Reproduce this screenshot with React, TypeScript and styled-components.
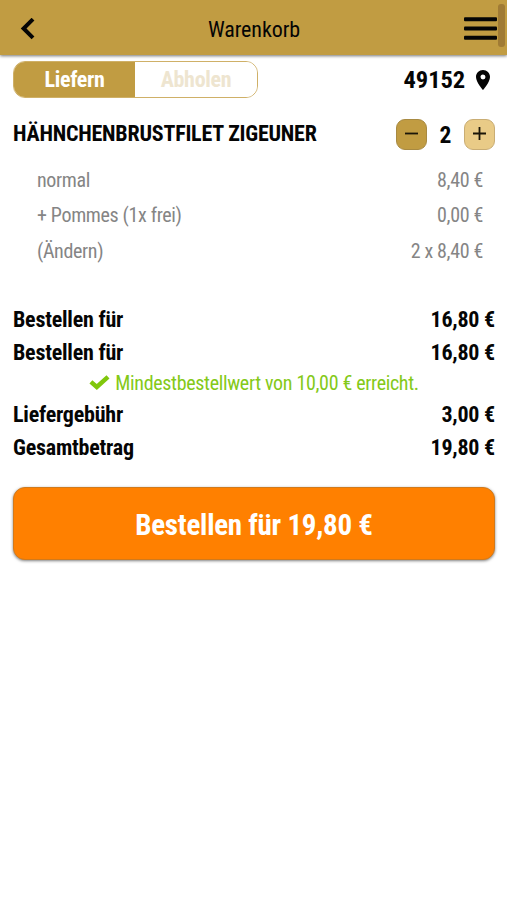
import React from "react";
import styled, { createGlobalStyle } from "styled-components";

const gold = "#c19c42";

const GlobalStyle = createGlobalStyle`
  *, *::before, *::after { box-sizing: border-box; }
  html, body { margin: 0; background: #fff; overflow: hidden; }
  body { font-family: "Roboto Condensed", Roboto, sans-serif; font-stretch: 75%; color: #050505; }
  button { font: inherit; font-stretch: inherit; color: inherit; padding: 0; margin: 0; }
`;

const Page = styled.div`
  width: 507px;
  height: 900px;
  background: #fff;
`;

const Header = styled.header`
  position: relative;
  height: 55px;
  display: grid;
  grid-template-columns: 60px 1fr 60px;
  align-items: center;
  padding-top: 2px;
  background: ${gold};
  box-shadow: 0 1px 3px rgba(0, 0, 0, 0.55);
`;

const Title = styled.h1`
  margin: 0;
  padding: 2px 0 0 1px;
  text-align: center;
  font-size: 22px;
  font-weight: 400;
  line-height: 30px;
  letter-spacing: -0.1px;
`;

const IconButton = styled.button<{ $end?: boolean }>`
  display: flex;
  justify-content: ${(p) => (p.$end ? "flex-end" : "flex-start")};
  padding: ${(p) => (p.$end ? "0 10px 0 0" : "0 0 0 20px")};
  border: 0;
  background: none;
  svg { display: block; }
`;

const ScrollThumb = styled.span`
  position: absolute;
  top: 4px;
  right: 2px;
  width: 7px;
  height: 43px;
  border-radius: 3px;
  background: #a07b35;
`;

const Content = styled.main`
  padding: 6px 12px 0 13px;
`;

const ModeBar = styled.div`
  display: flex;
  justify-content: space-between;
  align-items: center;
  height: 36px;
`;

const Toggle = styled.div`
  display: grid;
  grid-template-columns: 121px 1fr;
  width: 245px;
  height: 37px;
  border: 1px solid #cfb067;
  border-radius: 12px;
  overflow: hidden;
`;

const Mode = styled.button<{ $active?: boolean }>`
  border: 0;
  padding-top: 1px;
  background: ${(p) => (p.$active ? gold : "#fff")};
  color: ${(p) => (p.$active ? "#fff" : "#eee5d0")};
  font-size: 22px;
  font-weight: 700;
  line-height: 34px;
  letter-spacing: -0.3px;
`;

const Location = styled.div`
  display: flex;
  align-items: center;
  gap: 11px;
  padding: 1px 5px 0 0;
  font-size: 24.5px;
  font-weight: 700;
  letter-spacing: -0.1px;
`;

const Item = styled.section`
  padding-top: 21px;
`;

const ItemHead = styled.div`
  display: flex;
  justify-content: space-between;
  align-items: center;
  height: 32px;
`;

const ItemName = styled.h2`
  margin: 0;
  padding-bottom: 1px;
  font-size: 22px;
  font-weight: 700;
  letter-spacing: -0.22px;
  white-space: nowrap;
`;

const Stepper = styled.div`
  display: grid;
  grid-template-columns: 31px 37px 31px;
  align-items: center;
  text-align: center;
  font-size: 23.5px;
  font-weight: 700;
`;

const Count = styled.span`
  padding-top: 2px;
`;

const StepButton = styled.button<{ $light?: boolean }>`
  display: grid;
  place-items: center;
  width: 31px;
  height: 31px;
  padding-bottom: 1px;
  border: 1px solid ${(p) => (p.$light ? "#c9ad74" : "#a88a42")};
  border-radius: 9px;
  background: ${(p) => (p.$light ? "#e9cb87" : gold)};
`;

const Details = styled.div`
  padding: 12px 12px 0 24px;
`;

const DetailRow = styled.div`
  display: flex;
  justify-content: space-between;
  align-items: center;
  height: 35.6px;
  color: #858585;
  font-size: 20px;
  letter-spacing: -0.35px;
`;

const Totals = styled.section`
  padding-top: 34px;
`;

const TotalRow = styled.div`
  display: flex;
  justify-content: space-between;
  align-items: center;
  height: 33px;
  font-size: 22px;
  font-weight: 700;
  letter-spacing: -0.22px;
`;

const MinimumNote = styled.div`
  display: flex;
  align-items: center;
  justify-content: center;
  gap: 5px;
  height: 29px;
  color: #84c918;
  font-size: 20px;
  letter-spacing: -0.33px;
  svg { margin-bottom: 2px; }
`;

const OrderButton = styled.button`
  display: block;
  width: 100%;
  height: 73px;
  margin-top: 23px;
  padding-top: 4px;
  border: 1px solid #d17a1c;
  border-radius: 12px;
  background: #ff8000;
  box-shadow: 0 1px 3px rgba(0, 0, 0, 0.5);
  color: #fff;
  font-size: 29px;
  font-weight: 700;
  letter-spacing: -0.24px;
`;

const details = [
  ["normal", "8,40 €"],
  ["+ Pommes (1x frei)", "0,00 €"],
  ["(Ändern)", "2 x 8,40 €"],
];

const Total = ({ label, value }: { label: string; value: string }) => (
  <TotalRow>
    <span>{label}</span>
    <span>{value}</span>
  </TotalRow>
);

export default function App() {
  return (
    <Page>
      <GlobalStyle />
      <Header>
        <IconButton aria-label="Zurück">
          <svg width="16" height="22" viewBox="0 0 16 22" fill="none" stroke="#050505" strokeWidth="4">
            <path d="M13 1.2 3.6 10.5 13 19.8" />
          </svg>
        </IconButton>
        <Title>Warenkorb</Title>
        <IconButton $end aria-label="Menü">
          <svg width="33" height="24" viewBox="0 0 33 24" fill="#050505">
            <rect y="0.3" width="33" height="4" rx="1" />
            <rect y="9.5" width="33" height="4" rx="1" />
            <rect y="18.7" width="33" height="4" rx="1" />
          </svg>
        </IconButton>
        <ScrollThumb />
      </Header>
      <Content>
        <ModeBar>
          <Toggle>
            <Mode $active>Liefern</Mode>
            <Mode>Abholen</Mode>
          </Toggle>
          <Location>
            <span>49152</span>
            <svg width="14" height="20" viewBox="5 2 14 20" fill="#050505">
              <path d="M12 2C8.13 2 5 5.13 5 9c0 5.25 7 13 7 13s7-7.75 7-13c0-3.87-3.13-7-7-7zm0 9.5a2.5 2.5 0 0 1 0-5 2.5 2.5 0 0 1 0 5z" />
            </svg>
          </Location>
        </ModeBar>
        <Item>
          <ItemHead>
            <ItemName>HÄHNCHENBRUSTFILET ZIGEUNER</ItemName>
            <Stepper>
              <StepButton aria-label="Weniger">
                <svg width="13" height="13" viewBox="0 0 13 13" stroke="#1b1609" strokeWidth="1.8">
                  <path d="M0 6.5h13" />
                </svg>
              </StepButton>
              <Count>2</Count>
              <StepButton $light aria-label="Mehr">
                <svg width="13" height="13" viewBox="0 0 13 13" stroke="#1b1609" strokeWidth="1.8">
                  <path d="M0 6.5h13M6.5 0v13" />
                </svg>
              </StepButton>
            </Stepper>
          </ItemHead>
          <Details>
            {details.map(([name, price]) => (
              <DetailRow key={name}>
                <span>{name}</span>
                <span>{price}</span>
              </DetailRow>
            ))}
          </Details>
        </Item>
        <Totals>
          <Total label="Bestellen für" value="16,80 €" />
          <Total label="Bestellen für" value="16,80 €" />
          <MinimumNote>
            <svg width="21" height="15" viewBox="0 0 21 15" fill="none" stroke="#80c70c" strokeWidth="4.4">
              <path d="M1.9 6.8 7.8 12 19 1.8" />
            </svg>
            <span>Mindestbestellwert von 10,00 € erreicht.</span>
          </MinimumNote>
          <Total label="Liefergebühr" value="3,00 €" />
          <Total label="Gesamtbetrag" value="19,80 €" />
        </Totals>
        <OrderButton>Bestellen für 19,80 €</OrderButton>
      </Content>
    </Page>
  );
}
